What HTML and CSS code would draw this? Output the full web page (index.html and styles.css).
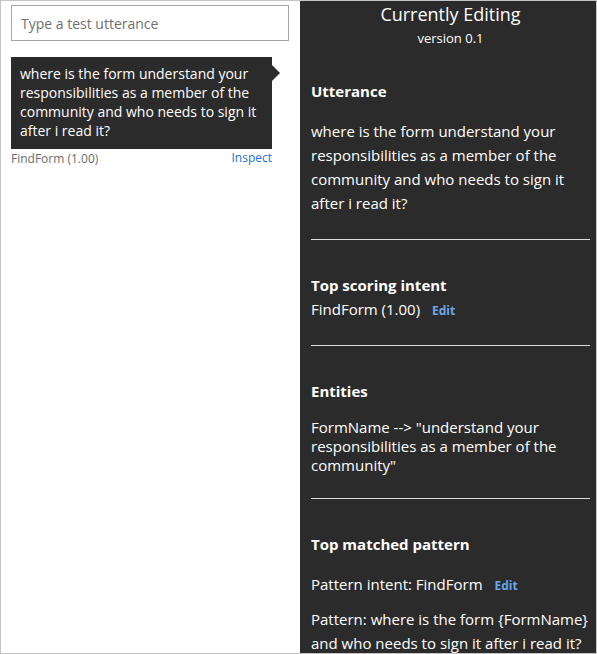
FILE: index.html
```html
<!DOCTYPE html>
<html>
<head>
<meta charset="utf-8">
<link rel="stylesheet" href="styles.css">
</head>
<body>
<div class="frame">
  <div class="left">
    <input class="utter-input" type="text" placeholder="Type a test utterance">
    <div class="bubble">where is the form understand your responsibilities as a member of the community and who needs to sign it after i read it?</div>
    <div class="result">
      <span class="score">FindForm (1.00)</span>
      <a class="inspect">Inspect</a>
    </div>
  </div>
  <div class="right">
    <div class="title">Currently Editing</div>
    <div class="version">version 0.1</div>

    <div class="h h-first">Utterance</div>
    <div class="body body-utt">where is the form understand your responsibilities as a member of the community and who needs to sign it after i read it?</div>
    <div class="sep sep-utt"></div>

    <div class="h">Top scoring intent</div>
    <div class="body body-intent">FindForm (1.00) <a class="edit">Edit</a></div>
    <div class="sep sep-intent"></div>

    <div class="h">Entities</div>
    <div class="body body-ent">FormName --&gt; "understand your responsibilities as a member of the community"</div>
    <div class="sep"></div>

    <div class="h">Top matched pattern</div>
    <div class="body body-pint">Pattern intent: FindForm <a class="edit">Edit</a></div>
    <div class="body body-pat">Pattern: where is the form {FormName} and who needs to sign it after i read it?</div>
  </div>
</div>
</body>
</html>
```
FILE: styles.css
```css
html, body {
  margin: 0;
  padding: 0;
  background: #fff;
}
body {
  font-family: "Open Sans", "Noto Sans", sans-serif;
}
.frame {
  box-sizing: border-box;
  width: 597px;
  height: 654px;
  border: 1px solid #c4c4c4;
  display: flex;
  overflow: hidden;
}
.left {
  width: 299px;
  flex: none;
  box-sizing: border-box;
  padding: 4px 10px 0 10px;
}
.utter-input {
  display: block;
  box-sizing: border-box;
  width: 278px;
  height: 36px;
  margin: 0;
  border: 1px solid #a6a6a6;
  padding: 0 9px;
  font-family: inherit;
  font-size: 14px;
  color: #333;
  outline: none;
}
.utter-input::placeholder {
  color: #6f6f6f;
}
.bubble {
  position: relative;
  margin-top: 16px;
  width: 261px;
  box-sizing: border-box;
  background: #2b2b2b;
  color: #fff;
  font-size: 14px;
  line-height: 19px;
  padding: 7px 6px 9px 9px;
}
.bubble::after {
  content: "";
  position: absolute;
  right: -8px;
  top: 8px;
  border-style: solid;
  border-width: 8px 0 8px 8px;
  border-color: transparent transparent transparent #2b2b2b;
}
.result {
  display: flex;
  justify-content: space-between;
  align-items: center;
  width: 261px;
  margin-top: -1px;
  height: 18px;
}
.score {
  font-size: 12px;
  color: #6b6b6b;
  margin-top: 2px;
}
.inspect {
  font-size: 12px;
  color: #1a73d0;
  cursor: pointer;
}
.right {
  flex: 1;
  background: #2b2b2b;
  color: #fff;
  box-sizing: border-box;
  padding: 1px 6px 0 11px;
}
.title {
  text-align: center;
  font-size: 18px;
  line-height: 24px;
}
.version {
  text-align: center;
  font-size: 13px;
  line-height: 18px;
  margin-top: 3px;
}
.h {
  font-weight: bold;
  font-size: 15px;
  line-height: 20px;
  margin-top: 35px;
}
.h-first {
  margin-top: 34px;
}
.body {
  font-size: 15px;
  line-height: 24px;
}
.body-utt {
  margin-top: 18px;
}
.body-intent {
  margin-top: 2px;
}
.body-ent {
  margin-top: 17px;
  line-height: 19px;
}
.body-pint {
  margin-top: 18px;
}
.body-pat {
  margin-top: 9px;
}
.sep {
  height: 1px;
  background: #dcdcdc;
  margin-top: 23px;
}
.sep-utt {
  margin-top: 24px;
}
.sep-intent {
  margin-top: 22px;
}
.edit {
  font-size: 12px;
  font-weight: bold;
  color: #6aa7e8;
  margin-left: 8px;
  cursor: pointer;
}
```
